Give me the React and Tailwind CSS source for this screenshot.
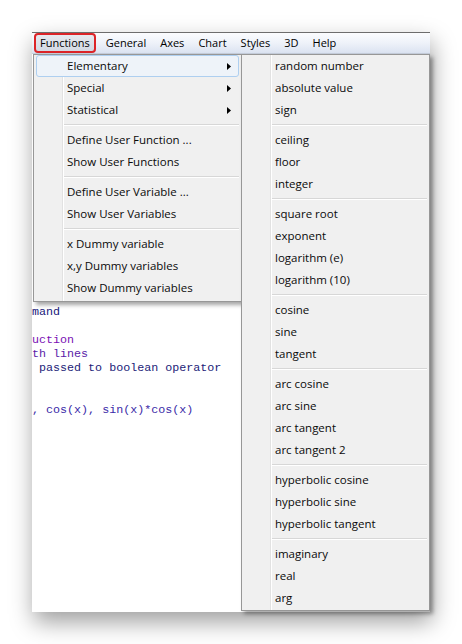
const mainMenu = [
  [
    { label: "Elementary", sub: true, active: true },
    { label: "Special", sub: true },
    { label: "Statistical", sub: true },
  ],
  [{ label: "Define User Function ..." }, { label: "Show User Functions" }],
  [{ label: "Define User Variable ..." }, { label: "Show User Variables" }],
  [
    { label: "x Dummy variable" },
    { label: "x,y Dummy variables" },
    { label: "Show Dummy variables" },
  ],
];

const subMenu = [
  ["random number", "absolute value", "sign"],
  ["ceiling", "floor", "integer"],
  ["square root", "exponent", "logarithm (e)", "logarithm (10)"],
  ["cosine", "sine", "tangent"],
  ["arc cosine", "arc sine", "arc tangent", "arc tangent 2"],
  ["hyperbolic cosine", "hyperbolic sine", "hyperbolic tangent"],
  ["imaginary", "real", "arg"],
];

const menuBar = ["Functions", "General", "Axes", "Chart", "Styles", "3D", "Help"];

function Arrow() {
  return (
    <svg width="4" height="7" viewBox="0 0 4 7" className="mr-[7px]">
      <path d="M0 0 L4 3.5 L0 7 Z" fill="#000" />
    </svg>
  );
}

function Separator() {
  return (
    <div className="h-2 flex flex-col justify-center pl-[30px] pr-[2px]">
      <div className="h-px bg-[#d7d7d7]" />
      <div className="h-px bg-white" />
    </div>
  );
}

function Item({ label, sub, active }) {
  return (
    <div
      className={`h-[22px] mx-[2px] flex items-center justify-between rounded-[3px] border ${
        active ? "border-[#aecff0] bg-[#eef3f9]" : "border-transparent"
      }`}
    >
      <span className="pl-[30px] text-[#0a0a0a]">{label}</span>
      {sub && <Arrow />}
    </div>
  );
}

function Menu({ groups, className }) {
  return (
    <div
      className={`absolute bg-[#f0f0f0] border border-[#979797] shadow-[3px_3px_4px_rgba(0,0,0,0.35)] ${className}`}
    >
      <div className="absolute left-[28px] top-0 bottom-0 w-[2px] flex">
        <div className="w-px bg-[#e2e2e2]" />
        <div className="w-px bg-white" />
      </div>
      <div className="relative">
        {groups.map((g, i) => (
          <div key={i}>
            {i > 0 && <Separator />}
            {g.map((it) => (
              <Item key={it.label} {...it} />
            ))}
          </div>
        ))}
      </div>
    </div>
  );
}

export default function App() {
  return (
    <div
      className="w-[462px] h-[644px] bg-white overflow-hidden pt-[32px] pl-[32px]"
      style={{ fontFamily: '"Open Sans", "Noto Sans", sans-serif' }}
    >
      <div className="relative w-[398px] h-[580px] bg-white shadow-[2px_10px_22px_rgba(0,0,0,0.38)] text-[11.5px]">
        {/* menu bar */}
        <div className="h-[22px] border-t border-[#6d6d6d] bg-gradient-to-b from-[#fbfcfe] via-[#eef2f9] to-[#dbe3f1] border-b border-b-[#c7cfdc] flex items-center pl-[2px] text-[11px]">
          {menuBar.map((m, i) => (
            <div
              key={m}
              className={`h-[20px] flex items-center ${
                i === 0
                  ? "rounded-[4px] border-2 border-[#dc2428] bg-gradient-to-b from-[#e6e9ef] to-[#d3d9e3] px-[4px] mr-[3px]"
                  : "px-[7px]"
              }`}
            >
              {m}
            </div>
          ))}
        </div>

        {/* editor */}
        <div
          className="pt-[4px] text-[11.7px] leading-[14px] whitespace-pre"
          style={{ fontFamily: '"Liberation Mono", "DejaVu Sans Mono", monospace' }}
        >
          <div className="h-[247px]" />
          <div className="text-[#17177a]">mand</div>
          <div>&nbsp;</div>
          <div className="text-[#7a10b4]">uction</div>
          <div className="text-[#5a1ca8]">th lines</div>
          <div className="text-[#1c1c78]"> passed to boolean operator</div>
          <div>&nbsp;</div>
          <div>&nbsp;</div>
          <div className="text-[#3a2aa8]">, cos(x), sin(x)*cos(x)</div>
        </div>

        <Menu groups={mainMenu} className="left-[1px] top-[22px] w-[209px] pb-[2px]" />
        <Menu
          groups={subMenu.map((g) => g.map((label) => ({ label })))}
          className="left-[209px] top-[22px] w-[189px] h-[557px]"
        />
      </div>
    </div>
  );
}
